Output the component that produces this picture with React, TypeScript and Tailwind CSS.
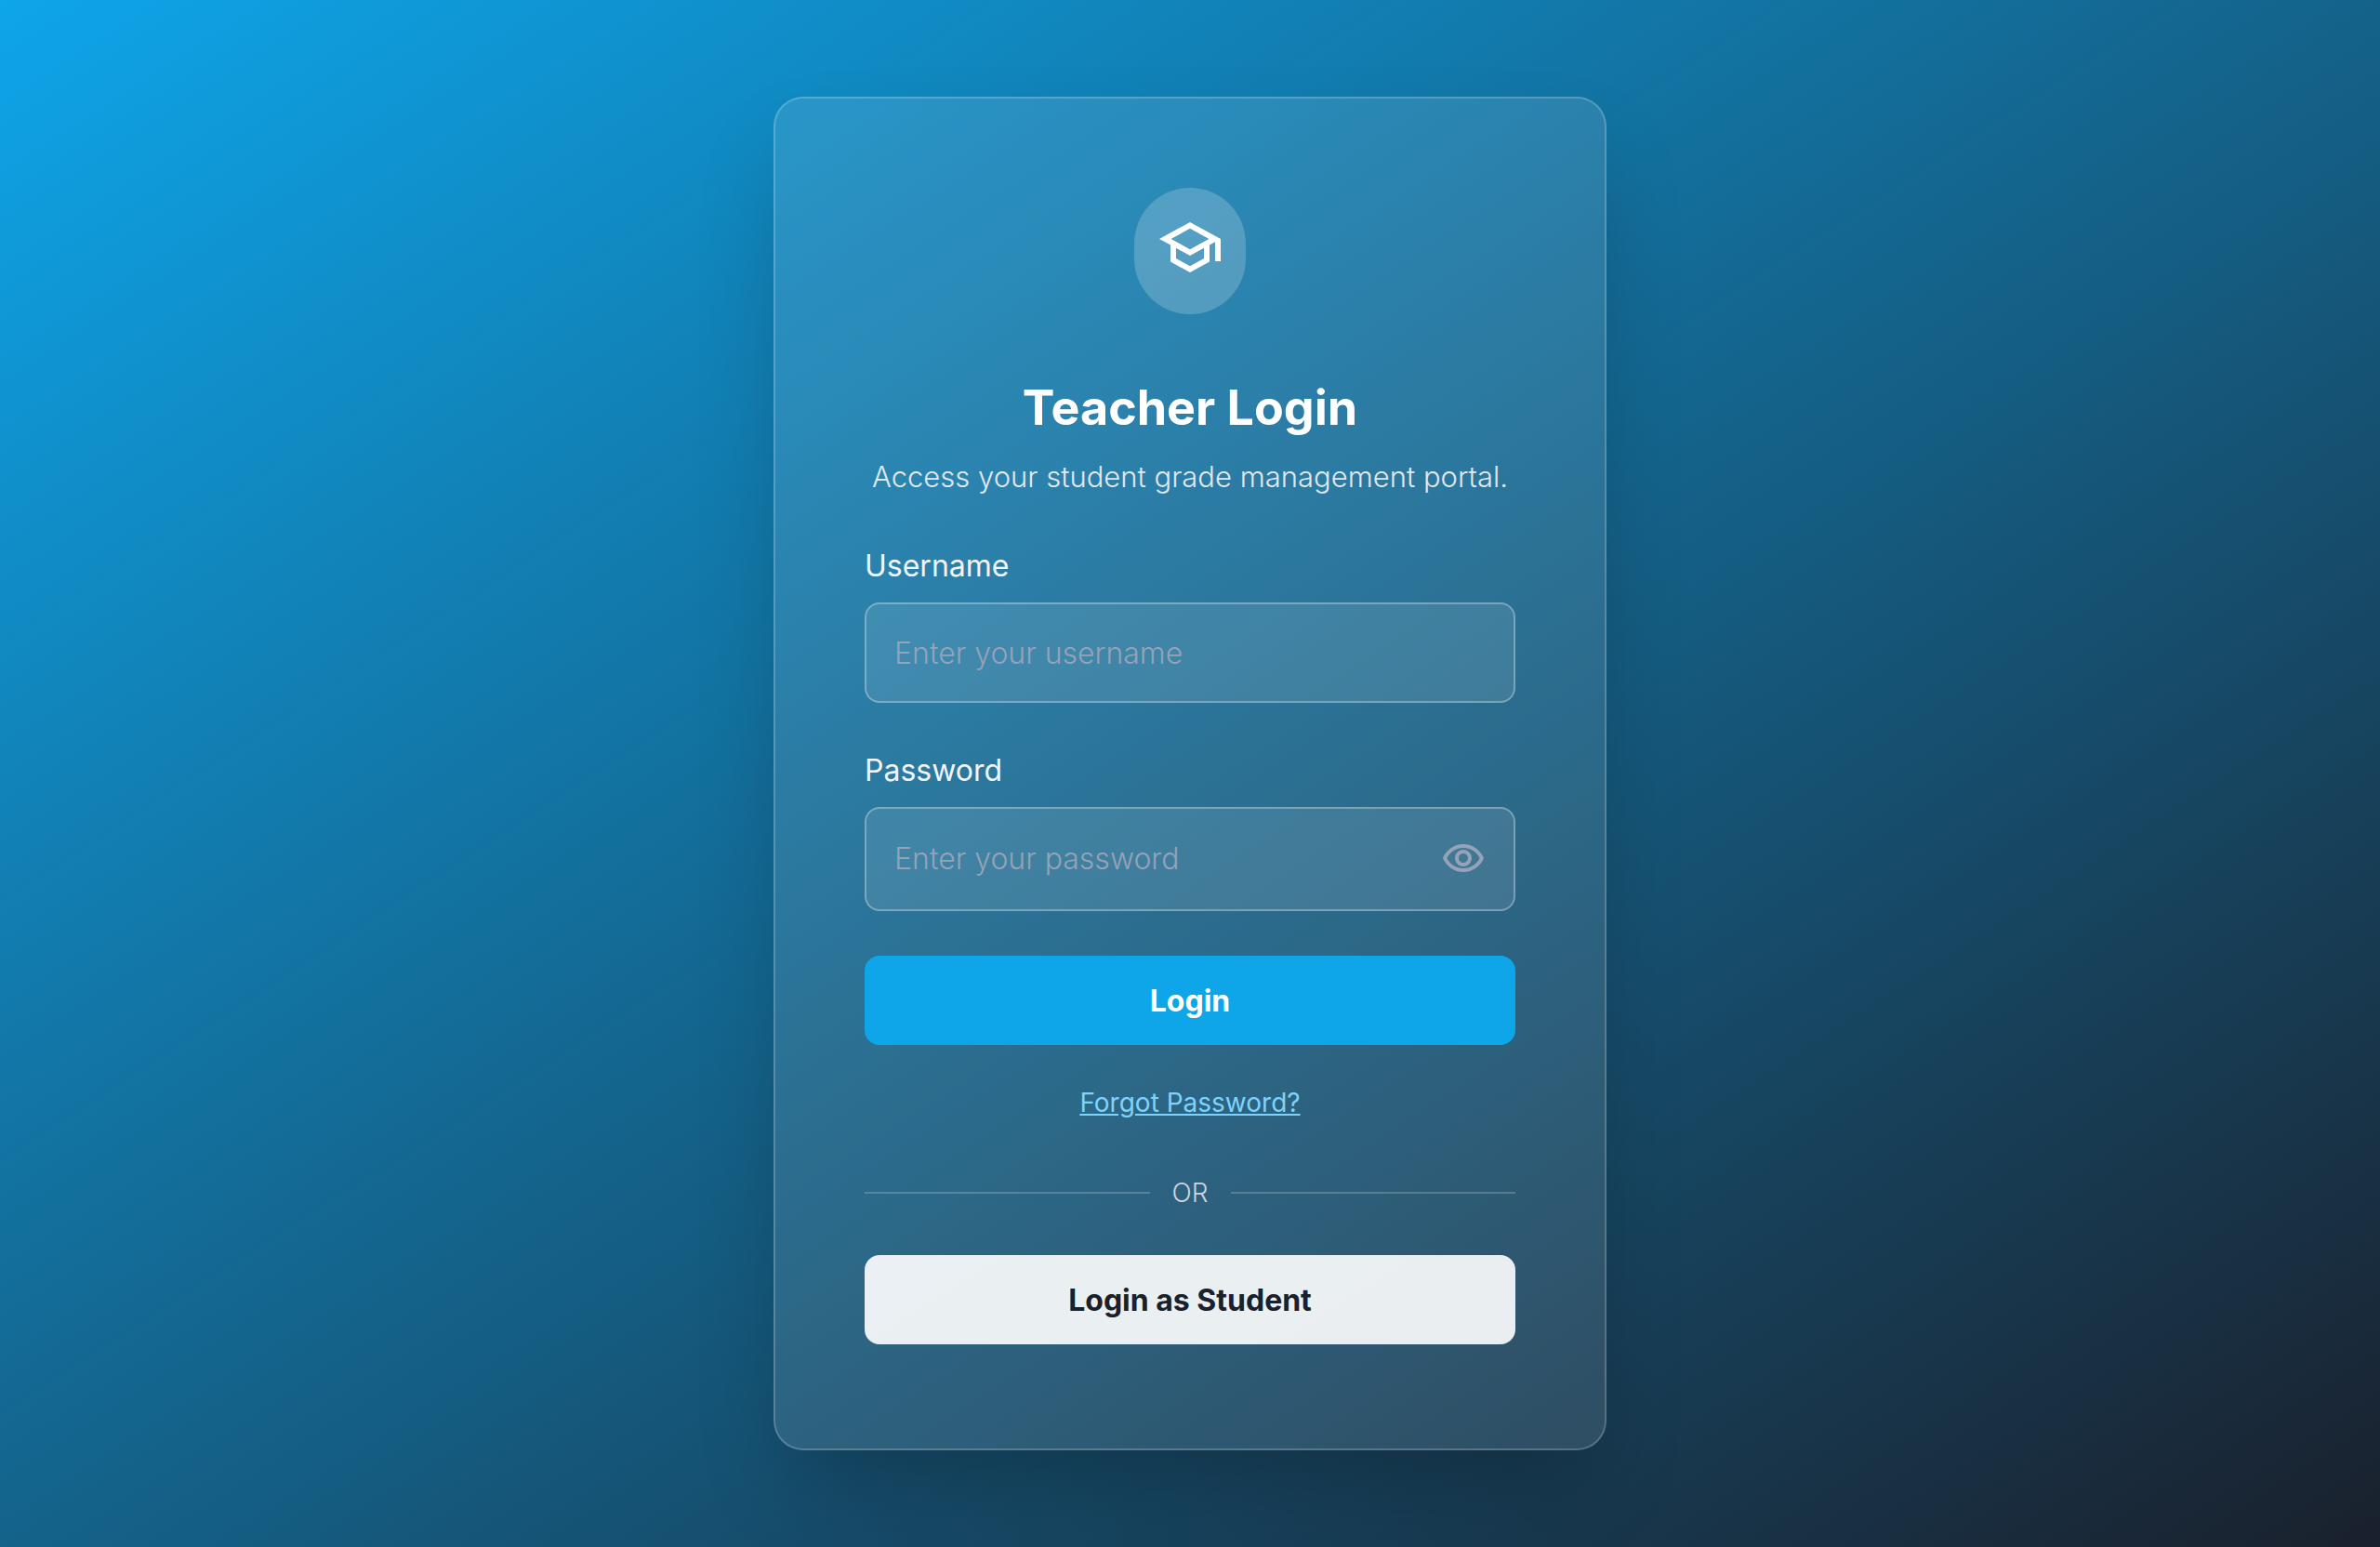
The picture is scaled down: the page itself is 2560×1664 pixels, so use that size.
import { useState } from 'react';

function SchoolIcon({ className }: { className?: string }) {
  return (
    <svg viewBox="0 0 24 24" fill="currentColor" aria-hidden="true" className={className}>
      <path d="M12 3L1 9l4 2.18v6L12 21l7-3.82v-6l2-1.09V17h2V9L12 3zm6.82 6L12 12.72 5.18 9 12 5.28 18.82 9zM17 15.99l-5 2.73-5-2.73v-3.72L12 15l5-2.73v3.72z" />
    </svg>
  );
}

function EyeIcon({ className }: { className?: string }) {
  return (
    <svg viewBox="0 0 24 24" fill="currentColor" aria-hidden="true" className={className}>
      <path d="M12 6c3.79 0 7.17 2.13 8.82 5.5C19.17 14.87 15.79 17 12 17s-7.17-2.13-8.82-5.5C4.83 8.13 8.21 6 12 6m0-2C7 4 2.73 7.11 1 11.5 2.73 15.89 7 19 12 19s9.27-3.11 11-7.5C21.27 7.11 17 4 12 4zm0 5c1.38 0 2.5 1.12 2.5 2.5S13.38 14 12 14s-2.5-1.12-2.5-2.5S10.62 9 12 9m0-2c-2.48 0-4.5 2.02-4.5 4.5S9.52 16 12 16s4.5-2.02 4.5-4.5S14.48 7 12 7z" />
    </svg>
  );
}

export default function App() {
  const [visible, setVisible] = useState(false);

  return (
    <main className="flex min-h-screen items-center justify-center bg-[linear-gradient(to_bottom_right,#0ea5e9,#1a202c)] p-8 font-['Inter',sans-serif] text-white">
      <div className="w-full max-w-4xl rounded-[32px] border-2 border-white/20 bg-white/10 px-24 pt-24 pb-28 shadow-[0_50px_100px_-24px_rgba(0,0,0,0.25)]">
        <header className="flex flex-col items-center text-center">
          <div className="rounded-full bg-white/20 px-6 pt-7 pb-9">
            <SchoolIcon className="size-[72px]" />
          </div>
          <h1 className="mt-16 text-[52px] leading-[74px] font-bold">Teacher Login</h1>
          <p className="mt-3.5 text-[31px] leading-[46px] font-light text-[#e2e8f0]">
            Access your student grade management portal.
          </p>
        </header>

        <form className="mt-12 flex flex-col" onSubmit={(e) => e.preventDefault()}>
          <label htmlFor="username" className="text-[32px] leading-[50px] font-normal text-[#f1f5f9]">
            Username
          </label>
          <input
            id="username"
            type="text"
            placeholder="Enter your username"
            className="mt-3.5 h-[108px] w-full rounded-2xl border-2 border-white/30 bg-white/10 px-[30px] text-[32px] font-light outline-none placeholder:text-[#94a3b8]"
          />

          <label htmlFor="password" className="mt-12 text-[32px] leading-[50px] font-normal text-[#f1f5f9]">
            Password
          </label>
          <div className="mt-3.5 flex h-[112px] items-center rounded-2xl border-2 border-white/30 bg-white/10 px-[30px]">
            <input
              id="password"
              type={visible ? 'text' : 'password'}
              placeholder="Enter your password"
              className="min-w-0 flex-1 bg-transparent text-[32px] font-light outline-none placeholder:text-[#94a3b8]"
            />
            <button type="button" aria-label="Show password" onClick={() => setVisible(!visible)} className="text-[#94a3b8]">
              <EyeIcon className="size-12" />
            </button>
          </div>

          <button type="submit" className="mt-12 h-24 rounded-2xl bg-[#0ea5e9] pt-0.5 text-[32px] font-bold">
            Login
          </button>
        </form>

        <div className="mt-10 text-center">
          <a href="#forgot" className="text-[28px] leading-[44px] font-normal text-[#7dd3fc] underline">
            Forgot Password?
          </a>
        </div>

        <div className="mt-[55px] flex items-center gap-6">
          <div className="h-0.5 flex-1 bg-white/20" />
          <span className="text-[28px] leading-[40px] font-light text-[#cbd5e1]">OR</span>
          <div className="h-0.5 flex-1 bg-white/20" />
        </div>

        <button type="button" className="mt-[47px] h-24 w-full rounded-2xl bg-white/90 pt-0.5 text-[32px] font-bold text-[#1a202c]">
          Login as Student
        </button>
      </div>
    </main>
  );
}
